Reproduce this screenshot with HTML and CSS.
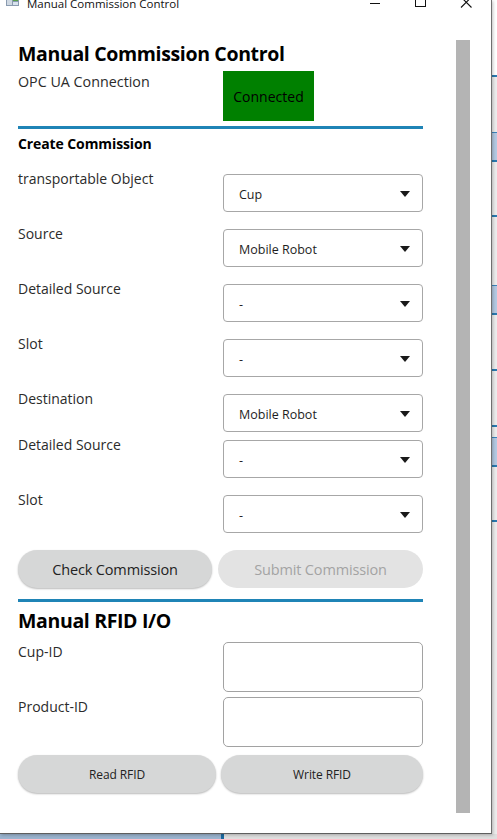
FILE: index.html
```html
<!DOCTYPE html>
<html>
<head>
<meta charset="utf-8">
<link rel="stylesheet" href="styles.css">
</head>
<body>
<div class="desk">
  <div class="top-row">
    <div class="win">
      <div class="titlebar">
        <svg class="appicon" width="13" height="9" viewBox="0 0 13 9">
          <rect x="0" y="0" width="13" height="9" fill="#8a9bb0"/>
          <rect x="1" y="1" width="5" height="7" fill="#cfd8e2"/>
          <rect x="7" y="1" width="5" height="3" fill="#5aa04a"/>
          <rect x="7" y="5" width="5" height="3" fill="#d9e3ee"/>
        </svg>
        <span class="title">Manual Commission Control</span>
        <div class="controls">
          <svg class="ctl" width="46" height="12" viewBox="0 0 46 12"><line x1="18" y1="3.5" x2="28" y2="3.5" stroke="#111" stroke-width="1"/></svg>
          <svg class="ctl" width="46" height="12" viewBox="0 0 46 12"><rect x="17.5" y="-3.5" width="10" height="10" fill="none" stroke="#111" stroke-width="1"/></svg>
          <svg class="ctl" width="46" height="12" viewBox="0 0 46 12"><path d="M17 -3 L27.5 7.5 M27.5 -3 L17 7.5" stroke="#111" stroke-width="1.1" fill="none"/></svg>
        </div>
      </div>
      <div class="client">
        <main class="content">
          <h1 class="h-main">Manual Commission Control</h1>
          <div class="opc-row">
            <span class="lbl lbl-opc">OPC UA Connection</span>
            <div class="status">Connected</div>
          </div>
          <div class="rule rule-1"></div>
          <h2 class="h-sub">Create Commission</h2>

          <div class="frow">
            <span class="lbl">transportable Object</span>
            <div class="combo"><span>Cup</span><i class="arrow"></i></div>
          </div>
          <div class="frow">
            <span class="lbl">Source</span>
            <div class="combo"><span>Mobile Robot</span><i class="arrow"></i></div>
          </div>
          <div class="frow">
            <span class="lbl">Detailed Source</span>
            <div class="combo"><span>-</span><i class="arrow"></i></div>
          </div>
          <div class="frow">
            <span class="lbl">Slot</span>
            <div class="combo"><span>-</span><i class="arrow"></i></div>
          </div>
          <div class="frow">
            <span class="lbl">Destination</span>
            <div class="combo"><span>Mobile Robot</span><i class="arrow"></i></div>
          </div>
          <div class="frow frow-tight">
            <span class="lbl">Detailed Source</span>
            <div class="combo"><span>-</span><i class="arrow"></i></div>
          </div>
          <div class="frow">
            <span class="lbl">Slot</span>
            <div class="combo"><span>-</span><i class="arrow"></i></div>
          </div>

          <div class="btn-row btn-row-1">
            <button class="btn btn-big btn-check">Check Commission</button>
            <button class="btn btn-big btn-submit" disabled>Submit Commission</button>
          </div>
          <div class="rule rule-2"></div>
          <h1 class="h-main h-rfid">Manual RFID I/O</h1>

          <div class="irow irow-first">
            <span class="lbl lbl-top">Cup-ID</span>
            <div class="tinput"></div>
          </div>
          <div class="irow">
            <span class="lbl lbl-top">Product-ID</span>
            <div class="tinput"></div>
          </div>
          <div class="btn-row btn-row-2">
            <button class="btn btn-small btn-read">Read RFID</button>
            <button class="btn btn-small btn-write">Write RFID</button>
          </div>
        </main>
        <div class="scrollbar"></div>
      </div>
    </div>
    <div class="side">
      <div class="s-white"></div>
      <div class="s-line"></div>
      <div class="s-gray g1"></div>
      <div class="s-block"></div>
      <div class="s-gray g2"></div>
      <div class="s-line"></div>
      <div class="s-gray g3"></div>
      <div class="s-block"></div>
      <div class="s-gray g4"></div>
      <div class="s-line"></div>
      <div class="s-gray g5"></div>
      <div class="s-line"></div>
      <div class="s-gray g6"></div>
      <div class="s-block"></div>
      <div class="s-gray g7"></div>
      <div class="s-line"></div>
      <div class="s-gray g8"></div>
    </div>
  </div>
  <div class="bottom">
    <div class="b-blue"></div>
    <div class="b-dark"></div>
    <div class="b-gray"></div>
  </div>
</div>
</body>
</html>
```

FILE: styles.css
```css
* { box-sizing: border-box; }
html, body { margin: 0; padding: 0; }
body {
  width: 497px;
  height: 839px;
  overflow: hidden;
  font-family: "Open Sans", "Noto Sans", sans-serif;
  background: #e6e6e6;
}
.desk { display: flex; flex-direction: column; width: 497px; height: 839px; }
.top-row { display: flex; height: 834px; }
.win {
  width: 492px;
  height: 834px;
  background: #ffffff;
  border-right: 1px solid #6f6f6f;
  border-bottom: 1px solid #5f5f5f;
  display: flex;
  flex-direction: column;
  box-shadow: 1px 1px 3px rgba(0,0,0,0.25);
  position: relative;
  z-index: 1;
}
.titlebar {
  height: 12px;
  display: flex;
  align-items: flex-start;
  overflow: hidden;
  flex: none;
}
.appicon { margin: -3px 0 0 6px; flex: none; }
.title {
  font-family: "Open Sans", sans-serif;
  font-size: 11.5px;
  line-height: 12px;
  margin: -2px 0 0 8px;
  color: #111;
  white-space: nowrap;
}
.controls { margin-left: auto; display: flex; margin-right: 1px; }
.ctl { display: block; }

.client { flex: 1; display: flex; min-height: 0; }
.content {
  width: 456px;
  padding: 28px 0 0 18px;
  display: flex;
  flex-direction: column;
}
.scrollbar {
  width: 14px;
  height: 773px;
  margin-top: 28px;
  background: #b4b4b4;
  flex: none;
}

.h-main {
  margin: 0;
  font-size: 19.5px;
  line-height: 27px;
  font-weight: 700;
  letter-spacing: -0.35px;
  color: #000;
}
.h-sub {
  margin: 5px 0 0 0;
  font-size: 14px;
  line-height: 20px;
  font-weight: 700;
  letter-spacing: -0.1px;
  color: #000;
}
.lbl {
  font-size: 14px;
  line-height: 19px;
  color: #2b2b2b;
  width: 205px;
  flex: none;
  margin-top: -5px;
  white-space: nowrap;
}
.lbl-opc { margin-top: 1px; font-size: 14.3px; }
.lbl-top { margin-top: 0; }

.opc-row { display: flex; margin-top: 4px; height: 50px; }
.status {
  width: 91px;
  height: 50px;
  background: #008000;
  color: #000;
  font-size: 14px;
  display: flex;
  align-items: center;
  justify-content: center;
}
.rule { width: 405px; height: 3px; background: #1f84b6; }
.rule-1 { margin-top: 5px; }
.rule-2 { margin-top: 11px; }

.frow { display: flex; margin-top: 17px; height: 38px; }
.h-sub + .frow { margin-top: 20px; }
.frow-tight { margin-top: 8px; }
.combo {
  width: 200px;
  height: 38px;
  border: 1px solid #a7a7a7;
  border-radius: 4px;
  display: flex;
  align-items: center;
  padding: 0 12px 0 15px;
  font-size: 12.5px;
  color: #1e1e1e;
  background: #fff;
}
.combo span { flex: 1; padding-top: 2px; }
.arrow {
  width: 0;
  height: 0;
  border-left: 5.5px solid transparent;
  border-right: 5.5px solid transparent;
  border-top: 6px solid #1a1a1a;
  margin-top: 1px;
}

.btn-row { display: flex; justify-content: space-between; width: 405px; }
.btn {
  font-family: "Open Sans", sans-serif;
  border: none;
  height: 38px;
  border-radius: 19px;
  padding: 0;
  color: #222;
}
.btn-row-1 { margin-top: 17px; }
.btn-big { font-size: 14.5px; letter-spacing: -0.15px; }
.btn-check { width: 194px; background: #d6d7d7; box-shadow: 0 1px 2px rgba(0,0,0,0.28); }
.btn-submit { width: 205px; background: #e3e3e3; color: #a3a3a3; }
.h-rfid { margin-top: 5px; }

.irow { display: flex; height: 50px; margin-top: 5px; }
.irow-first { margin-top: 8px; }
.tinput {
  width: 200px;
  height: 50px;
  border: 1px solid #a2a2a2;
  border-radius: 5px;
  background: #fff;
}
.btn-row-2 { margin-top: 8px; }
.btn-small { font-size: 12px; letter-spacing: -0.1px; background: #d6d7d7; box-shadow: 0 1px 2px rgba(0,0,0,0.28); }
.btn-read { width: 198px; }
.btn-write { width: 202px; }

.side { flex: 1; display: flex; flex-direction: column; background: #ececec; }
.s-white { height: 75px; background: #ffffff; }
.s-line { height: 2px; background: #2a7ab0; flex: none; }
.s-block { height: 30px; background: #b3c9e2; border-top: 1px solid #3b84bb; border-bottom: 2px solid #2a7ab0; flex: none; }
.g1 { height: 55px; }
.g2 { height: 53px; }
.g3 { height: 68px; }
.g4 { height: 54px; }
.g5 { height: 54px; }
.g6 { height: 10px; }
.g7 { height: 53px; }
.g8 { flex: 1; }

.bottom { display: flex; height: 5px; }
.b-blue { width: 221px; background: #9bb4cf; }
.b-dark { width: 3px; background: #1c6aa0; }
.b-gray { flex: 1; background: #dedede; }
```
